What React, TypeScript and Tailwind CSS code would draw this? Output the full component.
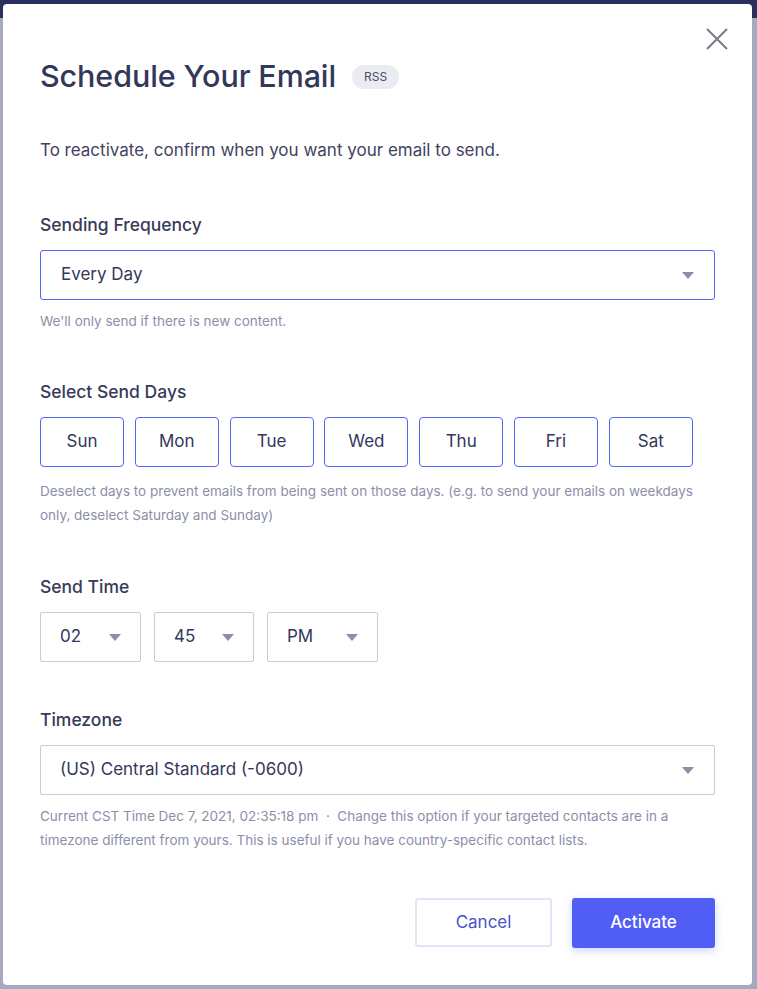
import React from "react";

const Arrow = () => (
  <svg width="12" height="7" viewBox="0 0 12 7" className="shrink-0">
    <path d="M0 0 L12 0 L6 7 Z" fill="#8b8ea7" />
  </svg>
);

const days = ["Sun", "Mon", "Tue", "Wed", "Thu", "Fri", "Sat"];

export default function App() {
  return (
    <div
      className="relative w-[757px] h-[989px] overflow-hidden bg-[#a5aabf]"
      style={{ fontFamily: "Inter, 'Noto Sans', 'Liberation Sans', sans-serif" }}
    >
      <div className="absolute left-0 top-0 w-full h-[18px] bg-[#2b2f5e]" />
      <div className="relative pt-[4px] pl-[3px]">
        <div className="relative w-[749px] h-[981px] bg-white rounded-[4px] pt-[55px] px-[37px] text-[#353a58]">
          <button className="absolute left-[699px] top-[20px] w-[30px] h-[30px] flex items-center justify-center">
            <svg width="22" height="22" viewBox="0 0 22 22">
              <path d="M1 1 L21 21 M21 1 L1 21" stroke="#7a7c86" strokeWidth="2" />
            </svg>
          </button>

          <div className="flex items-center h-[34px]">
            <h1 className="text-[30.5px] leading-[34px] font-medium text-[#33385a] tracking-[-0.1px]">
              Schedule Your Email
            </h1>
            <span className="ml-[16px] mt-[2px] h-[24px] px-[12px] rounded-full bg-[#ebecf1] text-[12px] leading-[24px] text-[#4c4f66]">
              RSS
            </span>
          </div>

          <p className="mt-[45px] text-[17px] leading-[24px] text-[#3f4360]">
            To reactivate, confirm when you want your email to send.
          </p>

          <div className="mt-[51px] text-[17.5px] leading-[24px] font-medium text-[#373b58]">Sending Frequency</div>
          <div className="mt-[13px] h-[50px] w-[675px] border border-[#5564f2] rounded-[3px] flex items-center justify-between pl-[20px] pr-[20px]">
            <span className="text-[17px] text-[#33375a]">Every Day</span>
            <Arrow />
          </div>
          <div className="mt-[11px] text-[13.5px] leading-[20px] text-[#8b8fa8]">
            We'll only send if there is new content.
          </div>

          <div className="mt-[49px] text-[17.5px] leading-[24px] font-medium text-[#373b58]">Select Send Days</div>
          <div className="mt-[13px] flex gap-[10.8px]">
            {days.map((d) => (
              <div
                key={d}
                className="w-[84px] h-[50px] border border-[#5564f2] rounded-[4px] flex items-center justify-center text-[17px] text-[#33375a]"
              >
                {d}
              </div>
            ))}
          </div>
          <div className="mt-[12px] text-[13.5px] leading-[24px] text-[#8b8fa8]">
            Deselect days to prevent emails from being sent on those days. (e.g. to send your emails on weekdays
            <br />
            only, deselect Saturday and Sunday)
          </div>

          <div className="mt-[48px] text-[17.5px] leading-[24px] font-medium text-[#373b58]">Send Time</div>
          <div className="mt-[13px] flex gap-[13px]">
            {[
              ["02", "w-[101px]"],
              ["45", "w-[100px]"],
              ["PM", "w-[111px]"],
            ].map(([v, w]) => (
              <div
                key={v}
                className={`${w} h-[50px] border border-[#c9cbd6] rounded-[2px] flex items-center justify-between pl-[19px] pr-[19px]`}
              >
                <span className="text-[17px] text-[#33375a]">{v}</span>
                <Arrow />
              </div>
            ))}
          </div>

          <div className="mt-[46px] text-[17.5px] leading-[24px] font-medium text-[#373b58]">Timezone</div>
          <div className="mt-[13px] h-[50px] w-[675px] border border-[#c9cbd6] rounded-[2px] flex items-center justify-between pl-[19px] pr-[20px]">
            <span className="text-[17px] text-[#33375a]">(US) Central Standard (-0600)</span>
            <Arrow />
          </div>
          <div className="mt-[9px] text-[13.5px] leading-[24px] text-[#8b8fa8]">
            Current CST Time Dec 7, 2021, 02:35:18 pm &nbsp;·&nbsp; Change this option if your targeted contacts are in a
            <br />
            timezone different from yours. This is useful if you have country-specific contact lists.
          </div>

          <div className="mt-[46px] flex justify-end gap-[20px]">
            <button className="w-[137px] h-[49px] border-2 border-[#e2e4f8] rounded-[3px] text-[17px] text-[#4553c6] bg-white">
              Cancel
            </button>
            <button className="w-[143px] h-[50px] rounded-[3px] bg-[#515ef6] text-[17px] font-medium text-white shadow-[0_3px_8px_rgba(81,94,246,0.25)]">
              Activate
            </button>
          </div>
        </div>
      </div>
    </div>
  );
}
